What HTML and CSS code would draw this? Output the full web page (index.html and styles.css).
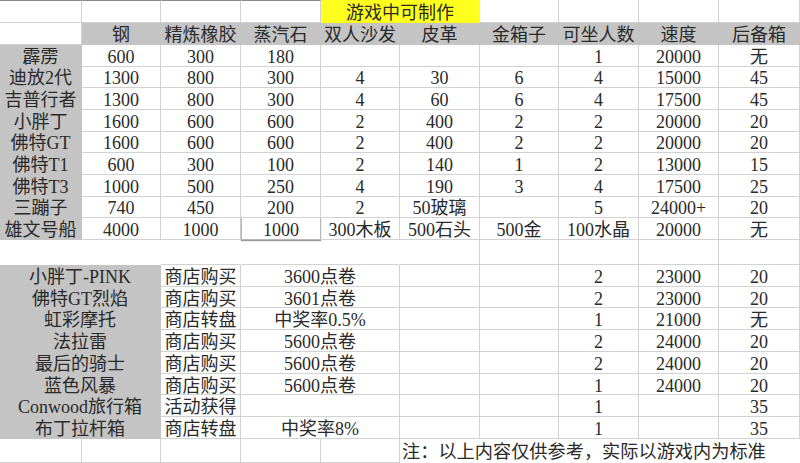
FILE: index.html
```html
<!DOCTYPE html>
<html lang="zh">
<head>
<meta charset="utf-8">
<title>游戏中可制作</title>
<link rel="stylesheet" href="styles.css">
</head>
<body>
<div class="sheet">
  <!-- title row -->
  <div class="c top"></div><div class="c top"></div><div class="c top"></div><div class="c top"></div>
  <div class="c y s2">游戏中可制作</div>
  <div class="c"></div><div class="c"></div><div class="c"></div><div class="c"></div>

  <!-- header row -->
  <div class="c"></div>
  <div class="c g">钢</div><div class="c g">精炼橡胶</div><div class="c g">蒸汽石</div><div class="c g">双人沙发</div><div class="c g">皮革</div><div class="c g">金箱子</div><div class="c g">可坐人数</div><div class="c g">速度</div><div class="c g">后备箱</div>

  <div class="c g">霹雳</div><div class="c">600</div><div class="c">300</div><div class="c">180</div><div class="c"></div><div class="c"></div><div class="c"></div><div class="c">1</div><div class="c">20000</div><div class="c">无</div>
  <div class="c g">迪放2代</div><div class="c">1300</div><div class="c">800</div><div class="c">300</div><div class="c">4</div><div class="c">30</div><div class="c">6</div><div class="c">4</div><div class="c">15000</div><div class="c">45</div>
  <div class="c g">吉普行者</div><div class="c">1300</div><div class="c">800</div><div class="c">300</div><div class="c">4</div><div class="c">60</div><div class="c">6</div><div class="c">4</div><div class="c">17500</div><div class="c">45</div>
  <div class="c g">小胖丁</div><div class="c">1600</div><div class="c">600</div><div class="c">600</div><div class="c">2</div><div class="c">400</div><div class="c">2</div><div class="c">2</div><div class="c">20000</div><div class="c">20</div>
  <div class="c g">佛特GT</div><div class="c">1600</div><div class="c">600</div><div class="c">600</div><div class="c">2</div><div class="c">400</div><div class="c">2</div><div class="c">2</div><div class="c">20000</div><div class="c">20</div>
  <div class="c g">佛特T1</div><div class="c">600</div><div class="c">300</div><div class="c">100</div><div class="c">2</div><div class="c">140</div><div class="c">1</div><div class="c">2</div><div class="c">13000</div><div class="c">15</div>
  <div class="c g">佛特T3</div><div class="c">1000</div><div class="c">500</div><div class="c">250</div><div class="c">4</div><div class="c">190</div><div class="c">3</div><div class="c">4</div><div class="c">17500</div><div class="c">25</div>
  <div class="c g">三蹦子</div><div class="c">740</div><div class="c">450</div><div class="c">200</div><div class="c">2</div><div class="c">50玻璃</div><div class="c"></div><div class="c">5</div><div class="c">24000+</div><div class="c">20</div>
  <div class="c g">雄文号船</div><div class="c">4000</div><div class="c">1000</div><div class="c sel">1000</div><div class="c">300木板</div><div class="c">500石头</div><div class="c">500金</div><div class="c">100水晶</div><div class="c">20000</div><div class="c">无</div>

  <!-- spacer row -->
  <div class="c n"></div><div class="c n"></div><div class="c nb"></div><div class="c nb"></div><div class="c nb"></div><div class="c nr"></div><div class="c"></div><div class="c"></div><div class="c"></div><div class="c"></div>

  <div class="c g s2">小胖丁-PINK</div><div class="c">商店购买</div><div class="c s2">3600点卷</div><div class="c"></div><div class="c"></div><div class="c">2</div><div class="c">23000</div><div class="c">20</div>
  <div class="c g s2">佛特GT烈焰</div><div class="c">商店购买</div><div class="c s2">3601点卷</div><div class="c"></div><div class="c"></div><div class="c">2</div><div class="c">23000</div><div class="c">20</div>
  <div class="c g s2">虹彩摩托</div><div class="c">商店转盘</div><div class="c s2">中奖率0.5%</div><div class="c"></div><div class="c"></div><div class="c">1</div><div class="c">21000</div><div class="c">无</div>
  <div class="c g s2">法拉雷</div><div class="c">商店购买</div><div class="c s2">5600点卷</div><div class="c"></div><div class="c"></div><div class="c">2</div><div class="c">24000</div><div class="c">20</div>
  <div class="c g s2">最后的骑士</div><div class="c">商店购买</div><div class="c s2">5600点卷</div><div class="c"></div><div class="c"></div><div class="c">2</div><div class="c">24000</div><div class="c">20</div>
  <div class="c g s2">蓝色风暴</div><div class="c">商店购买</div><div class="c s2">5600点卷</div><div class="c"></div><div class="c"></div><div class="c">1</div><div class="c">24000</div><div class="c">20</div>
  <div class="c g s2">Conwood旅行箱</div><div class="c">活动获得</div><div class="c s2"></div><div class="c"></div><div class="c"></div><div class="c">1</div><div class="c"></div><div class="c">35</div>
  <div class="c g s2">布丁拉杆箱</div><div class="c">商店转盘</div><div class="c s2">中奖率8%</div><div class="c"></div><div class="c"></div><div class="c">1</div><div class="c"></div><div class="c">35</div>

  <!-- note row -->
  <div class="c"></div><div class="c"></div><div class="c"></div><div class="c"></div><div class="c"></div>
  <div class="c note">注：以上内容仅供参考，实际以游戏内为标准</div>
</div>
</body>
</html>
```
FILE: styles.css
```css
html, body {
  margin: 0;
  padding: 0;
  background: #ffffff;
}

.sheet {
  width: 800px;
  height: 463px;
  display: grid;
  grid-template-columns: 82px 79px 80px 80px 79px 80px 79px 80px 80px 81px;
  grid-template-rows: 23px 22px repeat(9, 21.67px) 25px repeat(8, 21.75px) 24px;
  font-family: "Liberation Serif", "Noto Sans CJK SC", serif;
  font-size: 18px;
  color: #2a2a2a;
  overflow: hidden;
}

.c {
  box-sizing: border-box;
  border-right: 1px solid #d2d2d2;
  border-bottom: 1px solid #d2d2d2;
  display: flex;
  align-items: center;
  justify-content: center;
  line-height: 1;
  padding-top: 3px;
  white-space: nowrap;
  overflow: hidden;
}

.top {
  border-top: 1px solid #8a8a8a;
}

.g {
  background: #c4c4c4;
  border-color: #c4c4c4;
}

.y {
  background: #ffff1e;
  border-color: #ffff1e;
}

.s2 {
  grid-column: span 2;
}

.sel {
  border: 1px solid #b8b8b8;
  border-top: none;
  box-shadow: 0 1px 1px #9a9a9a;
}

.n {
  border-color: transparent;
}

.nb {
  border-right-color: transparent;
}

.nr {
  border-right-color: #d2d2d2;
}

.note {
  grid-column: span 5;
  justify-content: flex-start;
  padding-left: 2px;
  font-size: 18.2px;
  border-right: none;
  border-bottom: none;
}
```
